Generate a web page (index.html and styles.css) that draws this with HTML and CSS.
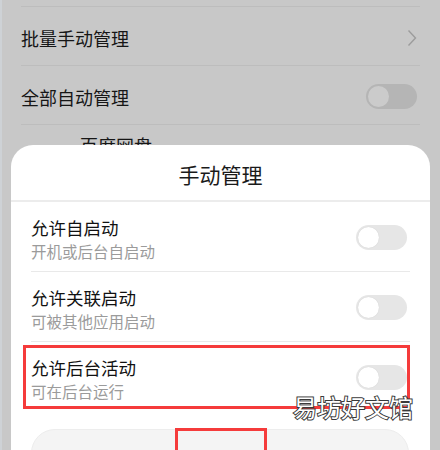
FILE: index.html
```html
<!DOCTYPE html>
<html lang="zh">
<head>
<meta charset="utf-8">
<link rel="stylesheet" href="styles.css">
</head>
<body>
<div class="screen">
  <div class="bg-list">
    <div class="bg-row">
      <span class="bg-label">批量手动管理</span>
      <svg class="chevron" width="10" height="18" viewBox="0 0 10 18"><polyline points="1.5,1.5 8.5,9 1.5,16.5" fill="none" stroke="#9c9c9c" stroke-width="1.4"/></svg>
    </div>
    <div class="bg-row">
      <span class="bg-label">全部自动管理</span>
      <span class="bg-toggle"><span class="bg-knob"></span></span>
    </div>
    <div class="bg-row app-row">
      <span class="bg-label">百度网盘</span>
    </div>
  </div>

  <div class="dialog">
    <div class="dialog-title">手动管理</div>
    <div class="opt">
      <div class="opt-text">
        <div class="opt-title">允许自启动</div>
        <div class="opt-sub">开机或后台自启动</div>
      </div>
      <span class="toggle"><span class="knob"></span></span>
    </div>
    <div class="opt">
      <div class="opt-text">
        <div class="opt-title">允许关联启动</div>
        <div class="opt-sub">可被其他应用启动</div>
      </div>
      <span class="toggle"><span class="knob"></span></span>
    </div>
    <div class="opt last">
      <div class="opt-text">
        <div class="opt-title">允许后台活动</div>
        <div class="opt-sub">可在后台运行</div>
      </div>
      <span class="toggle"><span class="knob"></span></span>
    </div>
    <div class="ok-btn"></div>
    <div class="mark mark-row"></div>
    <div class="mark mark-btn"></div>
    <div class="watermark">易坊好文馆</div>
  </div>
</div>
</body>
</html>
```
FILE: styles.css
```css
html, body {
  margin: 0;
  padding: 0;
  background: #c8c8c8;
}
.screen {
  position: relative;
  width: 438px;
  height: 450px;
  overflow: hidden;
  border-left: 2px solid #ced2d6;
  background: #c8c8c8;
  font-family: "Noto Sans CJK SC", "Noto Sans", sans-serif;
}
.bg-list {
  padding: 6px 20px 0 19px;
}
.bg-row {
  display: flex;
  align-items: center;
  justify-content: space-between;
  height: 59px;
  box-sizing: border-box;
  border-top: 1px solid #bdbdbd;
  padding-top: 3px;
}
.bg-label {
  font-size: 18px;
  color: #161616;
  line-height: 24px;
}
.chevron {
  margin-right: 3px;
}
.bg-toggle {
  width: 51px;
  height: 25px;
  border-radius: 13px;
  background: #b5b5b5;
  display: flex;
  align-items: center;
  padding-left: 2px;
  box-sizing: border-box;
  margin-right: 3px;
}
.bg-knob {
  width: 21px;
  height: 21px;
  border-radius: 50%;
  background: #cbcbcb;
}
.app-row {
  align-items: flex-start;
  padding-top: 8px;
  padding-left: 59px;
}
.dialog {
  position: absolute;
  left: 9px;
  top: 145px;
  width: 419px;
  height: 340px;
  background: #fff;
  border-radius: 22px;
}
.dialog-title {
  height: 57px;
  display: flex;
  align-items: center;
  justify-content: center;
  padding-top: 2px;
  box-sizing: border-box;
  font-size: 21px;
  color: #1a1a1a;
  border-bottom: 2px solid #ececec;
}
.opt {
  margin: 0 20px;
  height: 70px;
  box-sizing: border-box;
  padding-top: 14px;
  display: flex;
  justify-content: space-between;
  border-bottom: 1px solid #e9e9e9;
}
.opt.last {
  border-bottom: none;
}
.opt-title {
  font-size: 17.5px;
  line-height: 24px;
  color: #111;
}
.opt-sub {
  font-size: 15.5px;
  line-height: 22px;
  color: #9b9b9b;
}
.toggle {
  width: 51px;
  height: 25px;
  border-radius: 13px;
  background: #e6e6e6;
  display: flex;
  align-items: center;
  padding-left: 2px;
  box-sizing: border-box;
  margin-top: 9px;
  margin-right: 3px;
}
.knob {
  width: 21px;
  height: 21px;
  border-radius: 50%;
  background: #fff;
  box-shadow: 0 0 1px rgba(0,0,0,0.15);
}
.ok-btn {
  margin: 17px 21px 0 20px;
  height: 48px;
  border-radius: 24px;
  background: #f4f4f4;
  border: 1px solid #ededed;
}
.mark {
  position: absolute;
  border: 3px solid #f53b3b;
  box-sizing: border-box;
}
.mark-row {
  left: 12px;
  top: 200px;
  width: 387px;
  height: 64px;
}
.mark-btn {
  left: 164px;
  top: 283px;
  width: 92px;
  height: 60px;
}
.watermark {
  position: absolute;
  left: 282px;
  top: 247px;
  font-size: 24px;
  line-height: 30px;
  color: #fff;
  -webkit-text-stroke: 2px #3a3a3a;
  paint-order: stroke fill;
  letter-spacing: 0;
}
```
